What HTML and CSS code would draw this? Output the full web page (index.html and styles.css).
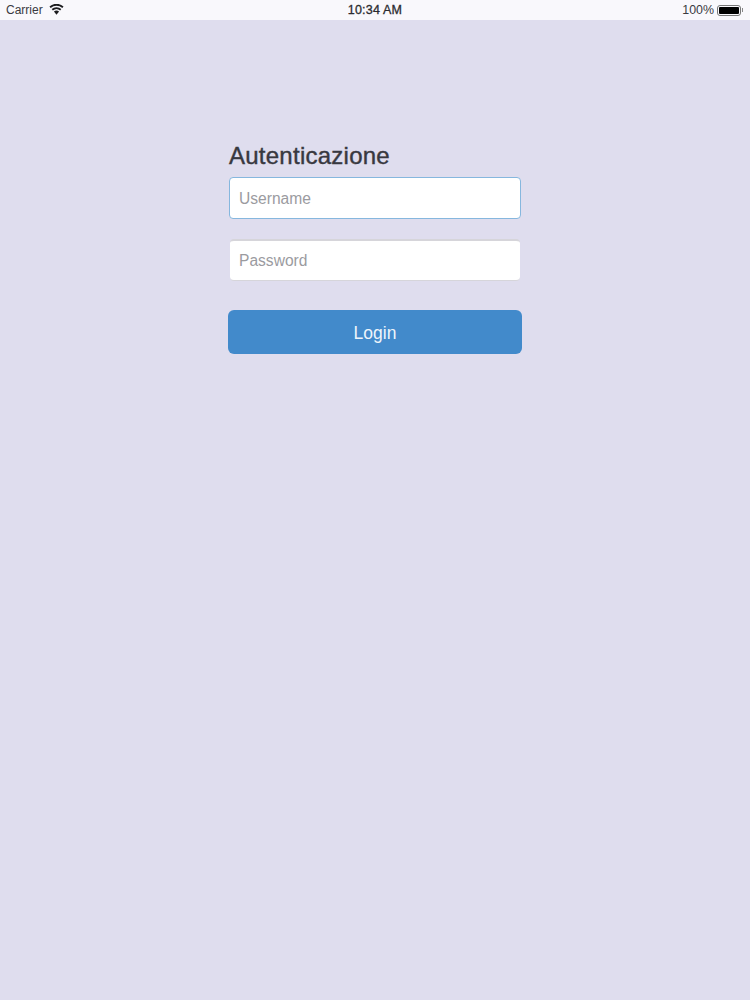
FILE: index.html
```html
<!DOCTYPE html>
<html lang="it">
<head>
<meta charset="utf-8">
<title>Autenticazione</title>
<link rel="stylesheet" href="styles.css">
</head>
<body>
<header class="status">
  <div class="status-left">
    <span>Carrier</span>
    <svg class="wifi" viewBox="0 0 16 12" width="15" height="11" aria-hidden="true">
      <path d="M8 11.6 5.2 8.3a4.2 4.2 0 0 1 5.6 0z" fill="#1c1c1f"/>
      <path d="M3.4 6.3a7 7 0 0 1 9.2 0" fill="none" stroke="#1c1c1f" stroke-width="2"/>
      <path d="M1 3.5a10.4 10.4 0 0 1 14 0" fill="none" stroke="#1c1c1f" stroke-width="2"/>
    </svg>
  </div>
  <div class="status-time">10:34 AM</div>
  <div class="status-right">
    <span class="percent">100%</span>
    <span class="battery"><span class="battery-fill"></span></span>
    <span class="battery-cap"></span>
  </div>
</header>
<main class="page">
  <form class="login">
    <h1 class="title">Autenticazione</h1>
    <div class="field field-focus">Username</div>
    <div class="field field-idle">Password</div>
    <div class="button">Login</div>
  </form>
</main>
</body>
</html>
```
FILE: styles.css
```css
html, body {
  margin: 0;
  padding: 0;
  height: 1000px;
  overflow: hidden;
}
body {
  background: #dfddee;
  font-family: "Liberation Sans", Arial, sans-serif;
  display: flex;
  flex-direction: column;
}
.status {
  height: 20px;
  box-sizing: border-box;
  background: #f9f8fc;
  display: grid;
  grid-template-columns: 1fr auto 1fr;
  align-items: center;
  padding: 0 6px;
  font-size: 12px;
  color: #3a3a3f;
}
.status-left {
  display: flex;
  align-items: center;
  gap: 6px;
}
.wifi {
  display: block;
  margin-top: -2px;
}
.status-time {
  font-size: 12.5px;
  letter-spacing: 0.2px;
  color: #2b2b30;
  -webkit-text-stroke: 0.3px #2b2b30;
}
.status-right {
  display: flex;
  justify-content: flex-end;
  align-items: center;
}
.percent {
  font-size: 12.4px;
}
.battery {
  width: 24px;
  height: 11px;
  box-sizing: border-box;
  margin-left: 3px;
  border: 1px solid #777;
  border-radius: 3px;
  padding: 1px;
  display: block;
}
.battery-fill {
  display: block;
  height: 100%;
  background: #000;
  border-radius: 1px;
}
.battery-cap {
  width: 1px;
  height: 4px;
  margin: 0 1px;
  background: #888;
}
.page {
  flex: 1;
  display: flex;
  justify-content: center;
}
.login {
  width: 294px;
  margin-top: 121px;
  display: flex;
  flex-direction: column;
}
.title {
  margin: 0 0 7px 1px;
  font-size: 24px;
  line-height: 29px;
  font-weight: 500;
  letter-spacing: 0.25px;
  color: #38383f;
  -webkit-text-stroke: 0.4px #38383f;
}
.field {
  height: 42px;
  box-sizing: border-box;
  background: #fff;
  border-radius: 4px;
  display: flex;
  align-items: center;
  font-size: 15.6px;
  color: #9b9b9f;
}
.field-focus {
  width: 292px;
  margin-left: 1px;
  border: 1px solid #86b7de;
  padding: 1px 0 0 9px;
}
.field-idle {
  width: 290px;
  margin: 20px 0 0 2px;
  padding-left: 9px;
  border-top: 2px solid #d6d5da;
  border-bottom: 1px solid #d6d5da;
}
.button {
  width: 294px;
  height: 44px;
  margin: 29px 0 0;
  padding-top: 2px;
  box-sizing: border-box;
  background: #428acb;
  border-radius: 6px;
  color: #eef5fb;
  font-size: 17.5px;
  display: flex;
  align-items: center;
  justify-content: center;
}
```
